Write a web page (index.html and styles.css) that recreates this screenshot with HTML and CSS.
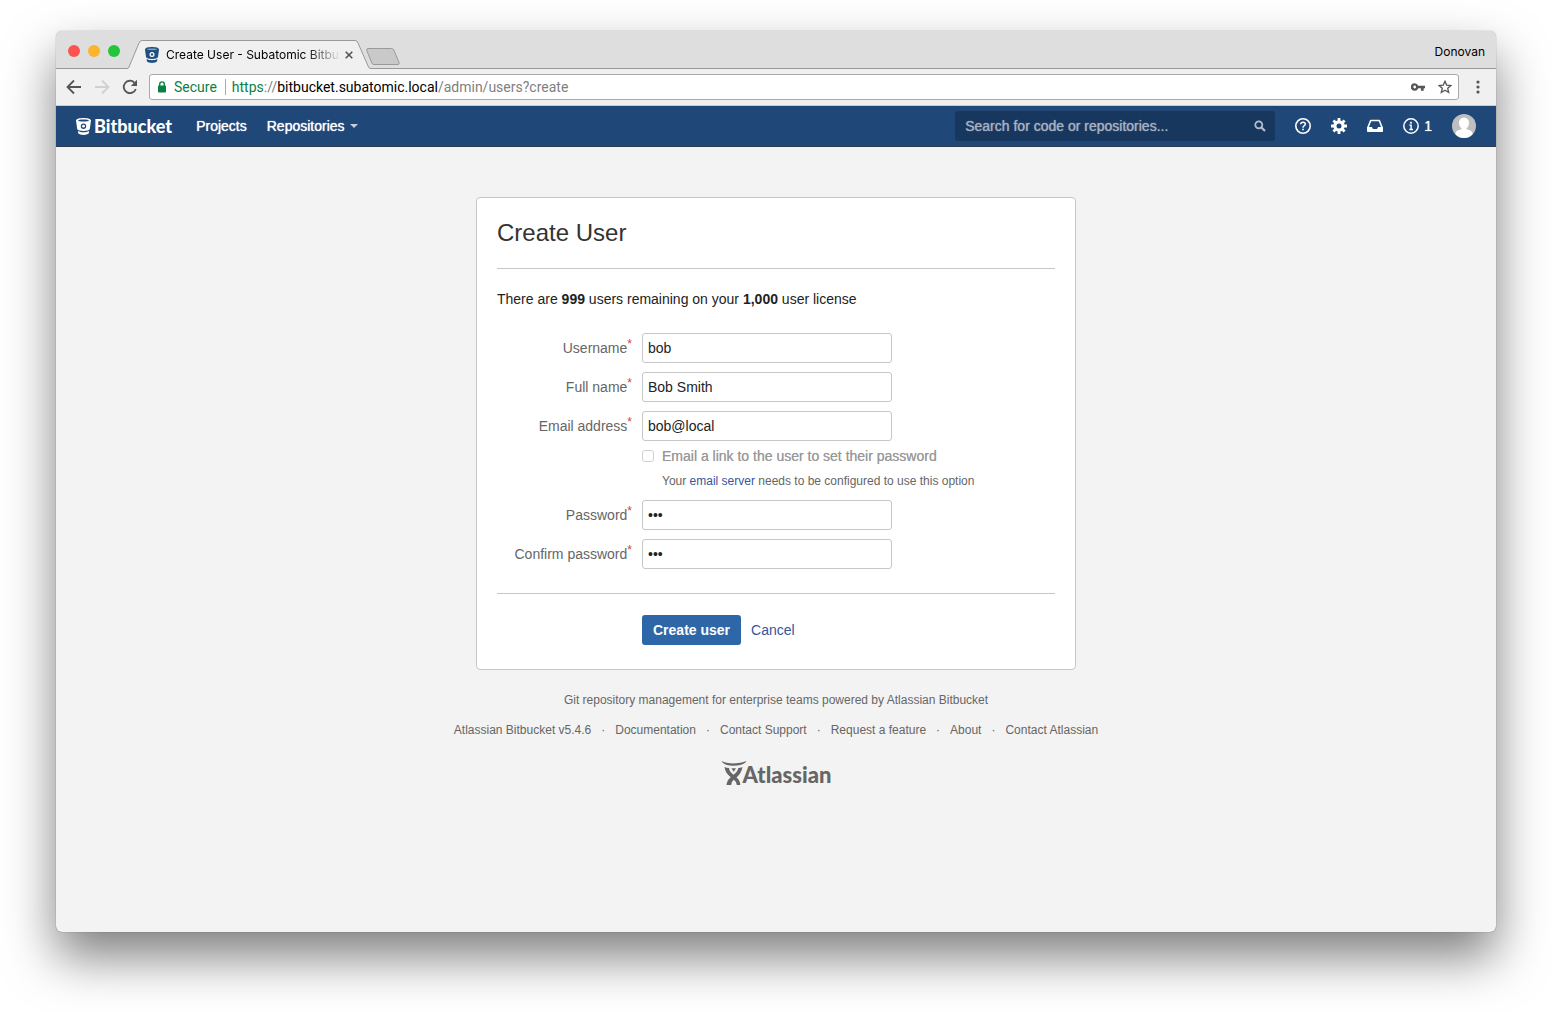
FILE: index.html
```html
<!DOCTYPE html>
<html lang="en">
<head>
<meta charset="utf-8">
<title>Create User - Subatomic Bitbucket</title>
<link rel="stylesheet" href="styles.css">
</head>
<body>
<div class="window">
  <div class="tab-strip">
    <div class="lights"><span class="light light-red"></span><span class="light light-yellow"></span><span class="light light-green"></span></div>
    <div class="tab">
      <svg class="tab-shape" width="246" height="30" viewBox="0 0 246 30" aria-hidden="true"><path d="M0 30V28.500Q1.500 28.500 2 27L12 3Q13 .5 15 .5H228Q230 .5 231 3L241.500 27Q242 28.500 244 28.500H246V30Z" fill="#f0f0f0"/><path d="M0 28.500Q1.500 28.500 2 27L12 3Q13 .5 15 .5H228Q230 .5 231 3L241.500 27Q242 28.500 244 28.500H246" fill="none" stroke="#999"/></svg>
      <svg class="favicon" width="14" height="16" viewBox="0 0 14 16" aria-hidden="true"><path d="M0 2.500C0 .8 3 0 7 0s7 .8 7 2.500L13 10c-.2 1.200-3 2-6 2s-5.800-.8-6-2Z" fill="#205081"/><ellipse cx="7" cy="2.200" rx="5" ry=".8" fill="#8ba6c0"/><circle cx="7" cy="7.500" r="2.500" fill="#fff"/><circle cx="7" cy="7.500" r="1.200" fill="#205081"/><path d="M1.500 12C4.500 13.600 9.500 13.600 12.500 12L12 14.500C10.500 16.400 3.500 16.400 2 14.500Z" fill="#205081"/></svg>
      <span class="tab-title">Create User - Subatomic Bitbu</span>
      <button class="plain tab-close" aria-label="Close tab"><svg width="8" height="8" viewBox="0 0 8 8"><path d="M.7.700l6.600 6.600M7.300.700L.7 7.300" stroke="#555" stroke-width="1.600"/></svg></button>
    </div>
    <button class="plain new-tab" aria-label="New tab"><svg width="34" height="17" viewBox="0 0 34 17"><path d="M2 .5H25.500Q27 .5 27.800 2L33 14.500Q33.500 16.500 32 16.500H8Q6.500 16.500 5.800 15L.8 2.500Q.4.500 2 .5Z" fill="#c9c9c9" stroke="#999"/></svg></button>
    <span class="profile">Donovan</span>
  </div>
  <div class="toolbar">
    <div class="nav-buttons">
      <button class="plain" aria-label="Back"><svg width="16" height="16" viewBox="0 0 16 16"><path d="M15 8H2M8 1.500L1.500 8L8 14.500" fill="none" stroke="#555" stroke-width="1.800"/></svg></button>
      <button class="plain" aria-label="Forward"><svg width="16" height="16" viewBox="0 0 16 16"><path d="M1 8H14M8 1.500L14.500 8L8 14.500" fill="none" stroke="#d0d0d0" stroke-width="1.800"/></svg></button>
      <button class="plain" aria-label="Reload"><svg width="16" height="16" viewBox="0 0 16 16"><path d="M13.800 10A6.200 6.200 0 1 1 12.400 3.600" fill="none" stroke="#555" stroke-width="1.800"/><path d="M15 .8V7H8.800Z" fill="#555"/></svg></button>
    </div>
    <div class="address">
      <svg width="8" height="12" viewBox="0 0 8 12" aria-hidden="true"><path d="M1.700 5V3.200a2.300 2.300 0 0 1 4.600 0V5" fill="none" stroke="#0b8043" stroke-width="1.400"/><rect y="4.500" width="8" height="7" rx=".8" fill="#0b8043"/></svg>
      <span class="secure">Secure</span>
      <span class="url"><span class="scheme">https</span>://<span class="host">bitbucket.subatomic.local</span>/admin/users?create</span>
      <svg class="key" width="14" height="8" viewBox="0 0 14 8" aria-hidden="true"><path fill-rule="evenodd" d="M3.700.2A3.800 3.800 0 0 1 7.200 2.700H14V5.200H12.700V7.800H9.900V5.200H7.200A3.800 3.800 0 1 1 3.700.2ZM3.700 2.600a1.400 1.400 0 1 0 0 2.800a1.400 1.400 0 1 0 0-2.800Z" fill="#555"/></svg>
      <svg width="14" height="14" viewBox="0 0 14 14" aria-hidden="true"><path d="M7 1.300L8.700 5.100L12.900 5.500L9.700 8.300L10.700 12.500L7 10.300L3.300 12.500L4.300 8.300L1.100 5.500L5.300 5.100Z" fill="none" stroke="#555" stroke-width="1.300"/></svg>
    </div>
    <button class="plain" aria-label="Menu"><svg width="4" height="14" viewBox="0 0 4 14"><g fill="#555"><circle cx="2" cy="2" r="1.600"/><circle cx="2" cy="7" r="1.600"/><circle cx="2" cy="12" r="1.600"/></g></svg></button>
  </div>
  <header class="header">
    <a class="brand" href="#">
      <svg width="15" height="17" viewBox="0 0 15 17" aria-hidden="true"><path fill-rule="evenodd" d="M0 2.500C0 .9 3.300 0 7.500 0S15 .9 15 2.500L13.800 11C13.600 12.200 11 13 7.500 13S1.400 12.200 1.200 11ZM7.500 1.400C4.500 1.400 2 1.900 2 2.500S4.500 3.600 7.500 3.600S13 3.100 13 2.500S10.500 1.400 7.500 1.400ZM7.500 5.500a2.700 2.700 0 1 0 0 5.400a2.700 2.700 0 1 0 0-5.400Z" fill="#fff"/><circle cx="7.500" cy="8.200" r="1.400" fill="#fff"/><path d="M1.800 13C5 14.800 10 14.800 13.200 13L12.700 15.500C11 17.400 4 17.400 2.300 15.500Z" fill="#fff"/></svg>
      <span>Bitbucket</span>
    </a>
    <nav class="menu"><a href="#">Projects</a><a href="#">Repositories<svg class="caret" width="8" height="4" viewBox="0 0 8 4" aria-hidden="true"><path d="M0 0H8L4 4Z" fill="#c3cedb"/></svg></a></nav>
    <label class="search"><input type="text" aria-label="Search" placeholder="Search for code or repositories...">
      <svg width="12" height="12" viewBox="0 0 12 12" aria-hidden="true"><circle cx="4.800" cy="4.800" r="3.500" fill="none" stroke="#b4bfcc" stroke-width="1.800"/><path d="M7.500 7.500L11 11" stroke="#b4bfcc" stroke-width="2.200"/></svg></label>
    <div class="tools">
      <a href="#" aria-label="Help"><svg width="16" height="16" viewBox="0 0 16 16"><circle cx="8" cy="8" r="7.200" fill="none" stroke="#fff" stroke-width="1.600"/><path d="M5.700 6.200Q5.800 4.200 8 4.200Q10.300 4.200 10.300 6.100Q10.300 7 9.300 7.700Q8 8.500 8 9.700" fill="none" stroke="#fff" stroke-width="1.500"/><rect x="7.200" y="10.700" width="1.600" height="1.600" fill="#fff"/></svg></a>
      <a href="#" aria-label="Administration"><svg width="16" height="16" viewBox="0 0 16 16"><circle cx="8" cy="8" r="4.100" fill="none" stroke="#fff" stroke-width="3.200"/><g stroke="#fff" stroke-width="2.800"><path d="M8 0V3M8 13V16M0 8H3M13 8H16M2.400 2.400L4.500 4.500M11.500 11.500L13.600 13.600M2.400 13.600L4.500 11.500M11.500 4.500L13.600 2.400"/></g></svg></a>
      <a href="#" aria-label="Inbox"><svg width="16" height="14" viewBox="0 0 16 14"><path d="M3.700 1.500H12.300L15.200 8.800V12.200H.8V8.800Z" fill="none" stroke="#fff" stroke-width="1.600" stroke-linejoin="round"/><path d="M.8 8H5Q5.300 10 6.500 10H9.500Q10.700 10 11 8H15.200V12.500H.8Z" fill="#fff"/></svg></a>
      <a class="info" href="#"><svg width="16" height="16" viewBox="0 0 16 16" aria-hidden="true"><circle cx="8" cy="8" r="7.200" fill="none" stroke="#fff" stroke-width="1.500"/><rect x="7.100" y="3.800" width="1.800" height="1.800" fill="#fff"/><path d="M6.300 7.100H8.100V11.500M6.300 11.500H10" fill="none" stroke="#fff" stroke-width="1.400"/></svg><span>1</span></a>
      <a href="#" aria-label="Profile"><svg width="24" height="24" viewBox="0 0 24 24"><defs><clipPath id="round"><circle cx="12" cy="12" r="12"/></clipPath></defs><g clip-path="url(#round)"><rect width="24" height="24" fill="#bfbfbf"/><path d="M12 3.800c3.300 0 5 2.200 5 5.200c0 2.600-1.200 4.400-2.500 5.300V15.200c3.500.7 6 2 6 4.500V24H3.500V19.700C3.500 17.200 6 15.900 9.500 15.200V14.300C8.200 13.400 7 11.600 7 9c0-3 1.700-5.200 5-5.200Z" fill="#fff"/></g></svg></a>
    </div>
  </header>
  <main class="content">
    <form class="card">
      <h1>Create User</h1>
      <p class="license">There are <strong>999</strong> users remaining on your <strong>1,000</strong> user license</p>
      <div class="fields">
        <label class="name" for="username">Username<i>*</i></label><input class="text" id="username" type="text" value="bob">
        <label class="name" for="fullname">Full name<i>*</i></label><input class="text" id="fullname" type="text" value="Bob Smith">
        <label class="name" for="email">Email address<i>*</i></label><input class="text" id="email" type="text" value="bob@local">
        <div class="option">
          <input id="notify" type="checkbox" disabled><label for="notify">Email a link to the user to set their password</label>
          <p>Your <a href="#">email server</a> needs to be configured to use this option</p>
        </div>
        <label class="name" for="password">Password<i>*</i></label><input class="text" id="password" type="password" value="bob">
        <label class="name" for="confirm">Confirm password<i>*</i></label><input class="text" id="confirm" type="password" value="bob">
      </div>
      <div class="actions"><button class="primary" type="button">Create user</button><a href="#">Cancel</a></div>
    </form>
    <footer class="footer">
      <p>Git repository management for enterprise teams powered by Atlassian Bitbucket</p>
      <ul><li>Atlassian Bitbucket v5.4.6</li><li><a href="#">Documentation</a></li><li><a href="#">Contact Support</a></li><li><a href="#">Request a feature</a></li><li><a href="#">About</a></li><li><a href="#">Contact Atlassian</a></li></ul>
      <a class="atlassian" href="#"><svg width="26" height="26" viewBox="0 0 26 26" aria-hidden="true"><path d="M.5 1C6 4.200 18 4.200 25.500 1L24.500 2.500Q20 5.800 12.500 5.800Q5 5.800 1.500 2.500Z" fill="#666"/><path fill-rule="evenodd" d="M3.500 7Q5.500 8 8 8Q8.500 12 12.500 14.800Q16.500 12 17.300 8Q19.500 8 21.500 7Q20.500 13 15.500 17.500Q19 20 19.300 25H15.800Q15.500 21.500 12.800 19.800Q10.500 21.500 10.200 25H5.500Q6 20 9.800 17.200Q4.200 13 3.500 7Z" fill="#666"/><path d="M10.500 8.300H15L12.700 11.800Z" fill="#666"/></svg><span>Atlassian</span></a>
    </footer>
  </main>
</div>
</body>
</html>
```
FILE: styles.css
```css
* { box-sizing: border-box; }
body {
  margin: 0;
  padding: 31px 56px 80px;
  background: #fff;
  color: #333;
  font: 14px/20px "Liberation Sans", Arial, sans-serif;
}
a { color: #3555a0; text-decoration: none; }
p, h1, ul { margin: 0; padding: 0; }
svg { display: block; flex: none; }
.plain { padding: 0; border: 0; background: none; }

.window {
  display: flex;
  flex-direction: column;
  min-height: calc(100vh - 111px);
  border-radius: 6px;
  background: #f3f3f3;
  box-shadow: 0 0 1px rgba(0, 0, 0, .6), 0 25px 50px rgba(0, 0, 0, .5);
}

/* Browser chrome */
.tab-strip {
  display: flex;
  align-items: flex-end;
  height: 38px;
  padding: 0 11px 0 12px;
  border-radius: 6px 6px 0 0;
  border-bottom: 1px solid #999;
  background: #dedede;
  color: #000;
  font: 12px/16px Inter, sans-serif;
}
.lights { display: flex; gap: 8px; align-self: center; padding-top: 3px; }
.light { width: 12px; height: 12px; border-radius: 50%; }
.light-red { background: #fc5551; }
.light-yellow { background: #fdb32c; }
.light-green { background: #22c53b; }
.tab {
  position: relative;
  display: flex;
  align-items: center;
  width: 246px;
  height: 28px;
  margin: 0 -7px 0 7px;
  padding: 2px 20px 0 18px;
}
.tab-shape { position: absolute; top: 0; left: 0; }
.favicon, .tab-title, .tab-close { position: relative; }
.tab-title {
  flex: 1;
  margin: 0 4px 0 7px;
  white-space: nowrap;
  -webkit-mask-image: linear-gradient(to right, #000 80%, transparent);
  mask-image: linear-gradient(to right, #000 80%, transparent);
}
.new-tab { margin-bottom: 3px; }
.profile { margin: 0 0 8px auto; }
.toolbar {
  display: flex;
  align-items: center;
  gap: 17px;
  height: 37px;
  padding: 0 16px 0 10px;
  border-bottom: 1px solid #ccc;
  background: #f0f0f0;
}
.nav-buttons { display: flex; gap: 12px; }
.address {
  display: flex;
  flex: 1;
  align-items: center;
  height: 26px;
  margin-left: -6px;
  padding: 0 6px 0 8px;
  border: 1px solid #aaa;
  border-radius: 3px;
  background: #fff;
  font: 14px/16px Roboto, sans-serif;
}
.secure {
  margin: 0 6px 0 8px;
  padding-right: 8px;
  border-right: 1px solid #aaa;
  color: #0b8043;
}
.url { color: #808080; }
.scheme { color: #0b8043; }
.host { color: #000; }
.key { margin: 0 13px 0 auto; }

/* Application header */
.header {
  display: flex;
  align-items: center;
  height: 41px;
  padding: 0 20px;
  border-bottom: 1px solid #2e3d54;
  background: #1f4778;
}
.header a { color: #fff; }
.brand { display: flex; align-items: center; gap: 3px; }
.brand span { font: 900 18px/20px Lato, sans-serif; }
.menu { display: flex; gap: 20px; margin-left: 24px; text-shadow: 0 0 1px #fff; }
.menu a { display: flex; align-items: center; }
.caret { margin-left: 5px; }
.search {
  display: flex;
  align-items: center;
  width: 320px;
  height: 30px;
  margin-left: auto;
  padding: 0 9px 0 10px;
  border-radius: 3px;
  background: #18375f;
}
.search input {
  flex: 1;
  min-width: 0;
  padding: 0;
  border: 0;
  outline: 0;
  background: none;
  color: #fff;
  font: inherit;
}
.search input::placeholder { color: #a5b1c0; text-shadow: 0 0 1px #a5b1c0; }
.tools { display: flex; align-items: center; gap: 20px; margin-left: 20px; }
.info { display: flex; align-items: center; gap: 5px; text-shadow: 0 0 1px #fff; }

/* Form */
.content { display: flex; flex-direction: column; align-items: center; padding: 50px 20px; }
.card {
  width: 100%;
  max-width: 600px;
  padding: 20px 20px 24px;
  border: 1px solid #c6c6c6;
  border-radius: 4px;
  background: #fff;
}
h1 {
  padding-bottom: 20px;
  border-bottom: 1px solid #c6c6c6;
  font: 24px/30px "Liberation Sans", Arial, sans-serif;
}
.license { padding: 20px 0 24px; color: #222; }
.fields {
  display: grid;
  grid-template-columns: 135px 1fr;
  gap: 9px 10px;
  padding-bottom: 24px;
  border-bottom: 1px solid #c6c6c6;
}
.name { padding-top: 5px; color: #666; text-align: right; }
.name i {
  display: inline-block;
  vertical-align: top;
  height: 12px;
  color: #d04437;
  font-size: 12px;
  font-style: normal;
  line-height: 12px;
}
.text {
  width: 250px;
  height: 30px;
  padding: 0 5px;
  border: 1px solid #c6c6c6;
  border-radius: 3px;
  background: #fff;
  color: #222;
  font: inherit;
}
.option {
  display: grid;
  grid-column: 2;
  grid-template-columns: 12px 1fr;
  gap: 6px 8px;
  align-items: center;
  margin: -3px 0 0;
  color: #999;
}
.option input {
  width: 12px;
  height: 12px;
  margin: 0;
  border: 1px solid #d0d0d0;
  border-radius: 3px;
  background: #fff;
  appearance: none;
}
.option label { line-height: 18px; text-shadow: 0 0 0 #aaa; }
.option p { grid-column: 2; color: #666; font-size: 12px; }
.actions { display: flex; align-items: center; gap: 10px; padding: 21px 0 0 145px; }
.primary {
  height: 30px;
  padding: 0 11px;
  border: 0;
  border-radius: 3px;
  background: #2d67a8;
  color: #fff;
  font: bold 14px/20px "Liberation Sans", Arial, sans-serif;
}

/* Footer */
.footer {
  display: flex;
  flex-direction: column;
  align-items: center;
  gap: 10px;
  padding-top: 20px;
  color: #666;
  font-size: 12px;
}
.footer a { color: #666; }
.footer ul { display: flex; flex-wrap: wrap; justify-content: center; list-style: none; }
.footer li + li::before { content: "·"; padding: 0 10px; }
.atlassian { display: flex; align-items: flex-end; margin-top: 10px; }
.atlassian span { margin-left: -4px; font: 900 22px/22px Lato, sans-serif; }
```
